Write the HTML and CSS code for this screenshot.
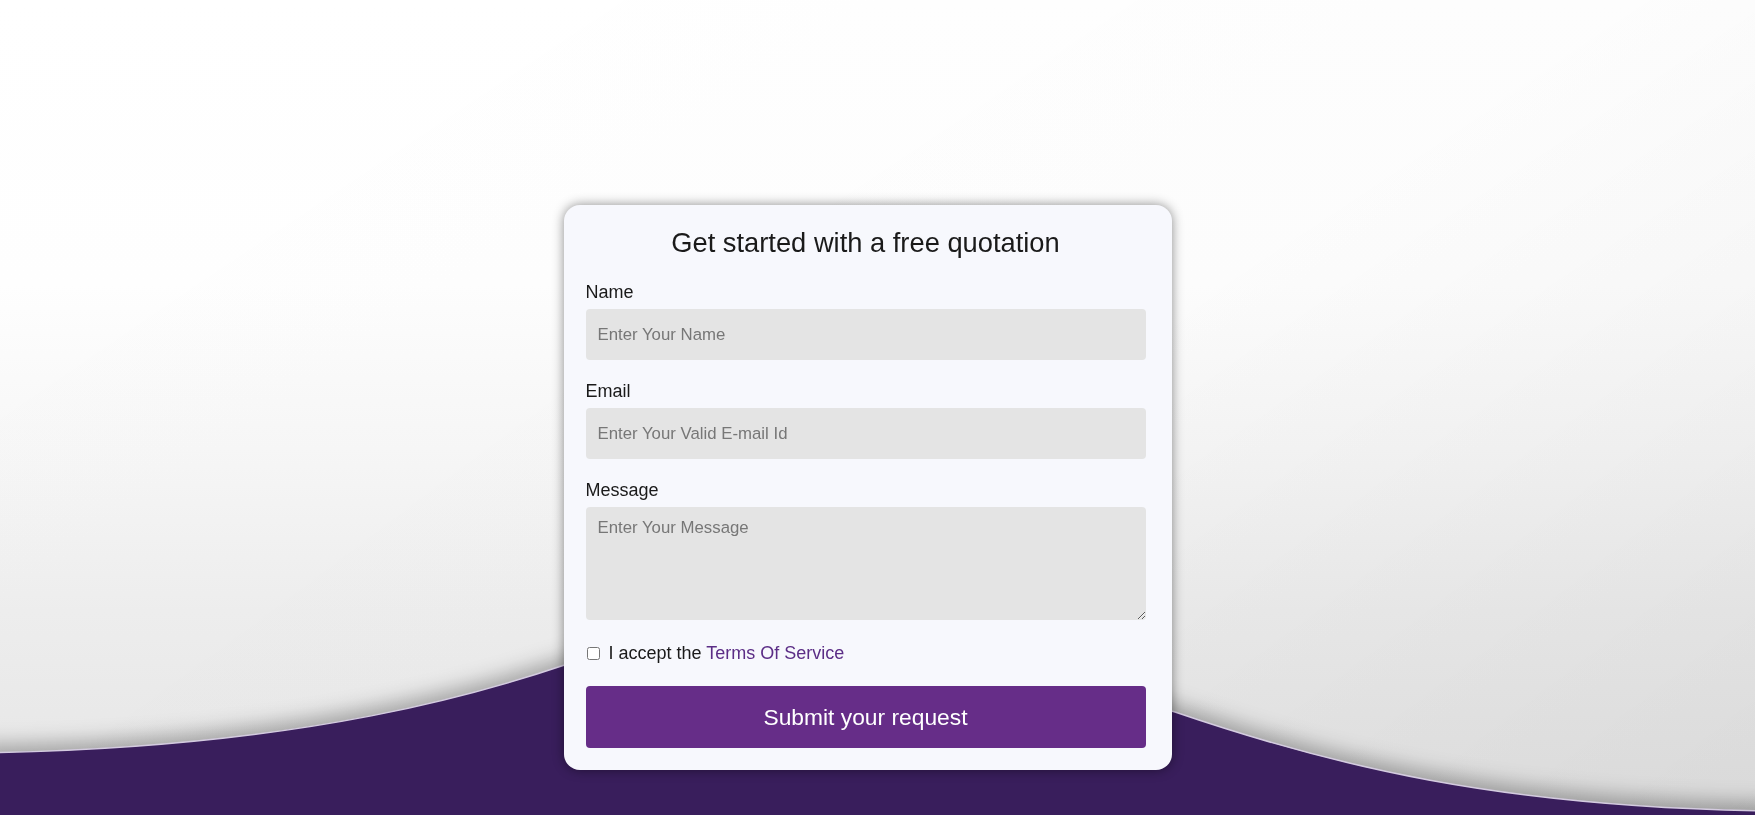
FILE: index.html
```html
<!DOCTYPE html>
<html lang="en">
<head>
<meta charset="utf-8">
<title>Get started with a free quotation</title>
<link rel="stylesheet" href="styles.css">
</head>
<body>
<svg class="backdrop" viewBox="0 0 1755 815" preserveAspectRatio="none" aria-hidden="true">
  <defs>
    <linearGradient id="sky" x1="0" y1="0" x2="0" y2="1">
      <stop offset="0" stop-color="#ffffff"/>
      <stop offset="0.35" stop-color="#fefefe"/>
      <stop offset="0.55" stop-color="#f7f7f7"/>
      <stop offset="0.75" stop-color="#eeeeee"/>
      <stop offset="1" stop-color="#e6e6e6"/>
    </linearGradient>
    <linearGradient id="side" x1="0" y1="0.3" x2="1" y2="1">
      <stop offset="0" stop-color="#000" stop-opacity="0"/>
      <stop offset="0.5" stop-color="#000" stop-opacity="0.01"/>
      <stop offset="1" stop-color="#000" stop-opacity="0.06"/>
    </linearGradient>
    <filter id="blur" x="-5%" y="-50%" width="110%" height="200%">
      <feGaussianBlur stdDeviation="10"/>
    </filter>
  </defs>
  <rect x="0" y="0" width="1755" height="815" fill="url(#sky)"/>
  <rect x="0" y="0" width="1755" height="815" fill="url(#side)"/>
  <path d="M-20,753 C300,748 490,695 620,645 C720,613 1000,660 1175,712 C1330,765 1500,808 1775,811 L1775,840 L-20,840 Z"
        fill="#000" fill-opacity="0.3" transform="translate(0,-8)" filter="url(#blur)"/>
  <path d="M-20,753 C300,748 490,695 620,645 C720,613 1000,660 1175,712 C1330,765 1500,808 1775,811 L1775,840 L-20,840 Z"
        fill="#391e5c" stroke="#d4cbe0" stroke-width="1.5"/>
</svg>

<main class="page">
  <form class="card">
    <h1 class="card-title">Get started with a free quotation</h1>

    <div class="field">
      <label class="field-label" for="name">Name</label>
      <input class="field-input" id="name" type="text" placeholder="Enter Your Name">
    </div>

    <div class="field">
      <label class="field-label" for="email">Email</label>
      <input class="field-input" id="email" type="email" placeholder="Enter Your Valid E-mail Id">
    </div>

    <div class="field field-last">
      <label class="field-label" for="message">Message</label>
      <textarea class="field-input field-textarea" id="message" placeholder="Enter Your Message"></textarea>
    </div>

    <div class="terms">
      <input class="terms-check" type="checkbox" id="terms">
      <label for="terms">I accept the <a class="terms-link" href="#">Terms Of Service</a></label>
    </div>

    <button class="submit" type="button">Submit your request</button>
  </form>
</main>
</body>
</html>
```

FILE: styles.css
```css
html, body {
  margin: 0;
  height: 100%;
}

body {
  font-family: "Liberation Sans", Arial, sans-serif;
  color: #1f1f1f;
  overflow: hidden;
  background: #ffffff;
}

.backdrop {
  position: fixed;
  left: 0;
  top: 0;
  width: 100%;
  height: 100%;
  z-index: 0;
  display: block;
}

.page {
  position: relative;
  z-index: 1;
  min-height: 100vh;
  box-sizing: border-box;
  display: flex;
  justify-content: center;
  align-items: flex-start;
  padding-top: 205px;
  padding-right: 20px;
}

.card {
  width: 608px;
  box-sizing: border-box;
  padding: 22px 26px 22px 22px;
  background: #f7f8fd;
  border-radius: 16px;
  box-shadow: 0 0 12px rgba(0, 0, 0, 0.45);
  display: flex;
  flex-direction: column;
}

.card-title {
  margin: 0 0 23px;
  font-size: 27.3px;
  line-height: 32px;
  font-weight: 400;
  text-align: center;
  color: #1a1a1a;
}

.field {
  display: flex;
  flex-direction: column;
  margin-bottom: 21px;
}

.field-last {
  margin-bottom: 23px;
}

.field-label {
  font-size: 18px;
  line-height: 21px;
  margin-bottom: 6px;
  color: #1a1a1a;
}

.field-input {
  display: block;
  width: 100%;
  box-sizing: border-box;
  height: 51px;
  border: none;
  outline: none;
  border-radius: 4px;
  background: #e4e4e4;
  padding: 0 12px;
  font-family: "Liberation Sans", Arial, sans-serif;
  font-size: 16.8px;
  color: #222;
}

.field-input::placeholder {
  color: #777777;
}

.field-textarea {
  height: 113px;
  padding: 11px 12px;
  resize: vertical;
}

.terms {
  display: flex;
  align-items: center;
  font-size: 18px;
  line-height: 21px;
  color: #1a1a1a;
  margin-bottom: 22px;
}

.terms-check {
  width: 13px;
  height: 13px;
  margin: 0 9px 0 1px;
}

.terms-link {
  color: #5b2d86;
  text-decoration: none;
}

.submit {
  display: block;
  width: 100%;
  height: 62px;
  border: none;
  border-radius: 4px;
  background: #662d88;
  color: #ffffff;
  font-family: "Liberation Sans", Arial, sans-serif;
  font-size: 22.8px;
  cursor: pointer;
}
```
